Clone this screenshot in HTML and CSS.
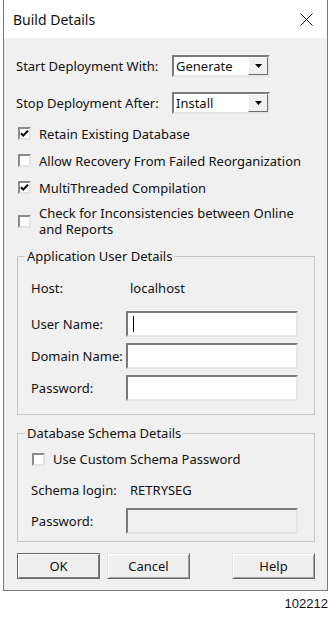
FILE: index.html
```html
<!DOCTYPE html>
<html lang="en">
<head>
    <meta charset="UTF-8">
    <title>Build Details</title>
    <link rel="stylesheet" href="styles.css">
</head>
<body>
    <div class="dialog">
        <div class="titlebar">
            <span class="title">Build Details</span>
            <svg class="close" width="13" height="13" viewBox="0 0 13 13">
                <path d="M0.5 0.5L12.5 12.5M12.5 0.5L0.5 12.5" stroke="#000" stroke-width="1" fill="none"/>
            </svg>
        </div>

        <div class="content">
            <div class="row">
                <span class="row-label">Start Deployment With:</span>
                <div class="select">
                    <span class="select-value">Generate</span>
                    <span class="select-btn"><svg width="7" height="4" viewBox="0 0 7 4"><path d="M0 0H7L3.5 4Z" fill="#000"/></svg></span>
                </div>
            </div>
            <div class="row row-second">
                <span class="row-label">Stop Deployment After:</span>
                <div class="select">
                    <span class="select-value">Install</span>
                    <span class="select-btn"><svg width="7" height="4" viewBox="0 0 7 4"><path d="M0 0H7L3.5 4Z" fill="#000"/></svg></span>
                </div>
            </div>

            <div class="checks">
                <div class="check-row">
                    <span class="check"><svg width="9" height="9" viewBox="0 0 9 9"><path d="M1 4.2L3.3 6.6L8 1.6" stroke="#000" stroke-width="2" fill="none"/></svg></span>
                    <span>Retain Existing Database</span>
                </div>
                <div class="check-row">
                    <span class="check"></span>
                    <span>Allow Recovery From Failed Reorganization</span>
                </div>
                <div class="check-row">
                    <span class="check"><svg width="9" height="9" viewBox="0 0 9 9"><path d="M1 4.2L3.3 6.6L8 1.6" stroke="#000" stroke-width="2" fill="none"/></svg></span>
                    <span>MultiThreaded Compilation</span>
                </div>
                <div class="check-row check-multi">
                    <span class="check"></span>
                    <span class="check-text">Check for Inconsistencies between Online and Reports</span>
                </div>
            </div>

            <fieldset class="group group-user">
                <legend>Application User Details</legend>
                <div class="group-body">
                    <div class="form-grid">
                        <span>Host:</span>
                        <span class="value">localhost</span>
                        <span>User Name:</span>
                        <div class="field"><span class="caret"></span></div>
                        <span>Domain Name:</span>
                        <div class="field"></div>
                        <span>Password:</span>
                        <div class="field"></div>
                    </div>
                </div>
            </fieldset>

            <fieldset class="group group-schema">
                <legend>Database Schema Details</legend>
                <div class="group-body">
                    <div class="check-row schema-check">
                        <span class="check"></span>
                        <span>Use Custom Schema Password</span>
                    </div>
                    <div class="form-grid schema-grid">
                        <span>Schema login:</span>
                        <span class="value">RETRYSEG</span>
                        <span>Password:</span>
                        <div class="field field-disabled"></div>
                    </div>
                </div>
            </fieldset>

            <div class="buttons">
                <button class="btn btn-default">OK</button>
                <button class="btn">Cancel</button>
                <button class="btn btn-help">Help</button>
            </div>
        </div>
    </div>

    <div class="figure-id">102212</div>
</body>
</html>
```

FILE: styles.css
```css
/* Grund-Layout */
body {
    margin: 0;
    padding: 0 2px 0 3px;
    background: #fff;
    font-family: "Noto Sans", "Open Sans", sans-serif;
    font-size: 13px;
    color: #111;
}

.dialog {
    border: 1px solid #7a7a7a;
    border-top: none;
    background: #f0f0f0;
}

.titlebar {
    height: 38px;
    background: #fff;
    display: flex;
    align-items: center;
    justify-content: space-between;
    padding: 0 14px 0 9px;
}

.title {
    font-size: 14px;
    margin-top: 1px;
}

.close {
    display: block;
}

.content {
    padding: 17px 12px 11px 12px;
}

/* Auswahlfelder oben */
.row {
    display: flex;
    align-items: center;
    height: 22px;
}

.row-second {
    margin-top: 15px;
}

.row-label {
    width: 156px;
}

.select {
    width: 98px;
    height: 22px;
    box-sizing: border-box;
    background: #fff;
    border: 2px solid;
    border-color: #7a7a7a #e6e6e6 #e6e6e6 #7a7a7a;
    display: flex;
    align-items: center;
    justify-content: space-between;
    padding-left: 2px;
}

.select-btn {
    width: 20px;
    height: 18px;
    box-sizing: border-box;
    background: #f0f0f0;
    border: 1px solid;
    border-color: #fff #6d6d6d #6d6d6d #fff;
    display: flex;
    align-items: center;
    justify-content: center;
}

/* Checkboxen */
.checks {
    margin-top: 6px;
}

.check-row {
    display: flex;
    align-items: center;
    height: 27px;
}

.check-row .check {
    margin: 0 8px 0 2px;
}

.check-multi {
    height: 32px;
    margin-top: 4px;
    line-height: 16px;
}

.check-text {
    max-width: 262px;
}

.check {
    flex: none;
    width: 13px;
    height: 13px;
    box-sizing: border-box;
    background: #fff;
    border: 2px solid;
    border-color: #8a8a8a #e3e3e3 #e3e3e3 #8a8a8a;
    display: flex;
    align-items: center;
    justify-content: center;
}

/* Gruppenrahmen */
.group {
    margin: 0 0 0 1px;
    padding: 0;
    min-width: 0;
    border: 1px solid #c6c6c6;
}

.group legend {
    margin-left: 7px;
    padding: 0 2px;
    line-height: 16px;
}

.group-body {
    padding-left: 13px;
}

.group-user {
    margin-top: 11px;
}

.group-user .group-body {
    padding-top: 12px;
    padding-bottom: 13px;
}

.group-schema {
    margin-top: 10px;
}

.group-schema .group-body {
    padding-top: 9px;
    padding-bottom: 7px;
}

.form-grid {
    display: grid;
    grid-template-columns: 95px 172px;
    grid-template-rows: 24px 26px 26px 26px;
    row-gap: 7px;
    align-items: center;
}

.group-user .form-grid {
    row-gap: 6px;
    grid-template-rows: 29px 26px 26px 26px;
    align-items: end;
}

.group-user .form-grid > span {
    align-self: center;
}

.group-user .form-grid > span:first-child,
.group-user .form-grid > .value {
    align-self: start;
    line-height: 24px;
}

.form-grid .value {
    padding-left: 4px;
}

.schema-grid {
    grid-template-rows: 24px 26px;
    row-gap: 6px;
    margin-top: 10px;
}

.schema-check {
    height: 18px;
}

.schema-check .check {
    margin-left: 1px;
}

.field {
    height: 26px;
    box-sizing: border-box;
    background: #fff;
    border: 2px solid;
    border-color: #7a7a7a #e6e6e6 #e6e6e6 #7a7a7a;
    display: flex;
    align-items: center;
    padding-left: 5px;
}

.field-disabled {
    background: #f0f0f0;
}

.caret {
    width: 1px;
    height: 16px;
    background: #000;
}

/* Schaltflaechen */
.buttons {
    display: flex;
    gap: 7px;
    margin: 11px 0 0 1px;
}

.btn {
    width: 83px;
    height: 26px;
    font: inherit;
    color: #111;
    background: #efefef;
    border: 1px solid;
    border-color: #e3e3e3 #696969 #696969 #e3e3e3;
    box-shadow: inset 1px 1px #fff, inset -1px -1px #a0a0a0;
    padding: 0;
}

.btn-default {
    border-color: #6b6b6b;
    box-shadow: inset 1px 1px #fff, inset -1px -1px #7a7a7a;
}

.btn-help {
    margin-left: auto;
}

.figure-id {
    text-align: right;
    padding-top: 5px;
    font-family: "Liberation Sans", Arial, sans-serif;
    font-size: 13px;
    color: #111;
}
```
